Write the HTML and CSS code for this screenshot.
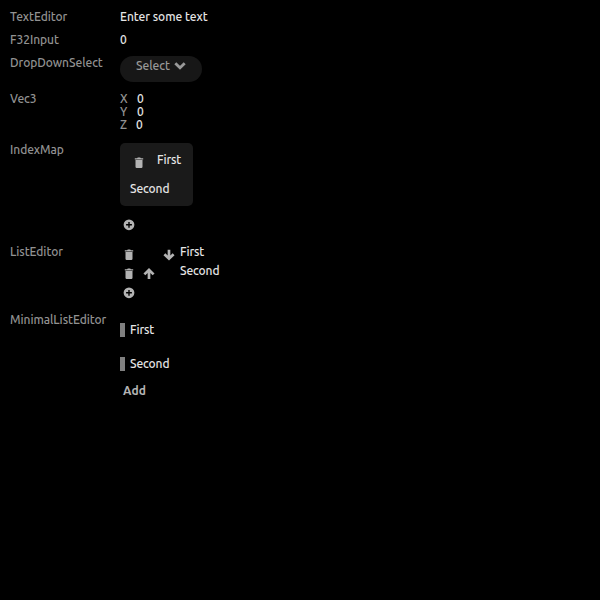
FILE: index.html
```html
<!DOCTYPE html>
<html lang="en">
<head>
<meta charset="utf-8">
<title>Editors</title>
<link rel="stylesheet" href="styles.css">
</head>
<body>
<svg width="0" height="0" class="defs">
  <symbol id="trash" viewBox="0 0 18 18"><path d="M4.8 4.2h2.3l.7-.6h2.4l.7.6h2.3v1.3H4.8zM5.5 5.9h7v6.8q0 1.2-1.2 1.2H6.7q-1.2 0-1.2-1.2z"/></symbol>
  <symbol id="down" viewBox="0 0 18 18"><path class="line" d="M9 3.7v8.6M4.4 8.2L9 12.7l4.6-4.5"/></symbol>
  <symbol id="up" viewBox="0 0 18 18"><path class="line" d="M9 13.9V5.3M4.4 9.4L9 4.9l4.6 4.5"/></symbol>
  <symbol id="plus" viewBox="0 0 18 18"><path fill-rule="evenodd" d="M9 3.4a5.4 5.4 0 1 0 0 10.8A5.4 5.4 0 1 0 9 3.4zM8.3 5.9h1.4v2.2h2.2v1.4H9.7v2.2H8.3V9.5H6.1V8.1h2.2z"/></symbol>
</svg>
<main class="form">
  <div class="row row-text"><span class="label">TextEditor</span><span class="value v-text">Enter some text</span></div>
  <div class="row row-num"><span class="label">F32Input</span><span class="value">0</span></div>
  <div class="row row-select"><span class="label">DropDownSelect</span>
    <div class="select"><span>Select</span><svg class="chevron" viewBox="0 0 12 10"><path d="M1.3 2.2L6 6.7l4.7-4.5"/></svg></div>
  </div>
  <div class="row row-vec"><span class="label">Vec3</span>
    <div class="vec">
      <div class="axis"><span>X</span><b>0</b></div>
      <div class="axis"><span>Y</span><b>0</b></div>
      <div class="axis axis-z"><span>Z</span><b>0</b></div>
    </div>
  </div>
  <div class="row row-map"><span class="label">IndexMap</span>
    <div class="map">
      <div class="card">
        <div class="entry"><svg class="icon"><use href="#trash"/></svg><span class="name">First</span></div>
        <div class="name">Second</div>
      </div>
      <svg class="icon map-add"><use href="#plus"/></svg>
    </div>
  </div>
  <div class="row row-list"><span class="label">ListEditor</span>
    <div class="list">
      <div class="item"><svg class="icon"><use href="#trash"/></svg><i class="icon"></i><svg class="icon"><use href="#down"/></svg><span class="name">First</span></div>
      <div class="item"><svg class="icon"><use href="#trash"/></svg><svg class="icon"><use href="#up"/></svg><i class="icon"></i><span class="name">Second</span></div>
      <div class="item"><svg class="icon"><use href="#plus"/></svg></div>
    </div>
  </div>
  <div class="row"><span class="label">MinimalListEditor</span>
    <div class="minimal">
      <div class="bar"><span class="name">First</span></div>
      <div class="bar"><span class="name">Second</span></div>
      <div class="add">Add</div>
    </div>
  </div>
</main>
</body>
</html>
```
FILE: styles.css
```css
* { box-sizing: border-box; }
body { margin: 0; background: #000; color: #e6e6e6; font: 500 12px/18px Ubuntu, "Noto Sans", sans-serif; }
.defs { position: absolute; }
.form { padding: 8px 10px; }
.row { display: grid; grid-template-columns: 110px auto; justify-content: start; align-items: start; white-space: nowrap; }
.row-text, .row-num { height: 23px; }
.row-select { height: 36px; }
.row-vec { height: 51px; }
.row-map { height: 102px; }
.row-list { height: 68px; }
.label { color: #929292; letter-spacing: -0.05px; }
.v-text { letter-spacing: -0.03px; }
.name { letter-spacing: -0.1px; }
.select { display: flex; width: 82px; height: 26px; margin-top: 2px; padding: 1px 0 0 16px; border-radius: 13px; background: #171717; color: #999; }
.select span { width: 38px; }
.chevron { width: 12px; height: 10px; margin-top: 4px; }
.chevron path { fill: none; stroke: #999; stroke-width: 2.8; }
.vec { padding-top: 2px; }
.axis { display: flex; height: 13px; line-height: 13px; }
.axis span { width: 17px; color: #929292; }
.axis-z span { width: 16px; }
.axis b { font-weight: 500; }
.icon { display: block; flex: none; width: 18px; height: 18px; fill: #b3b3b3; }
.line { fill: none; stroke: #b3b3b3; stroke-width: 2.7; }
.map { padding-top: 2px; }
.card { width: 73px; height: 63px; padding: 8px 10px; border-radius: 5px; background: #1a1a1a; }
.entry { display: flex; height: 29px; }
.entry .icon { margin: 3px 9px 0 0; }
.map-add { margin-top: 10px; }
.item { display: flex; gap: 2px; height: 19px; }
.item .icon { margin-top: 3px; }
.minimal { padding-top: 12px; }
.bar { height: 14px; margin-bottom: 20px; padding-left: 5px; border-left: 5px solid #808080; line-height: 14px; }
.add { margin: -9px 0 0 3px; color: #b3b3b3; font-weight: 700; letter-spacing: 0.1px; }
```
